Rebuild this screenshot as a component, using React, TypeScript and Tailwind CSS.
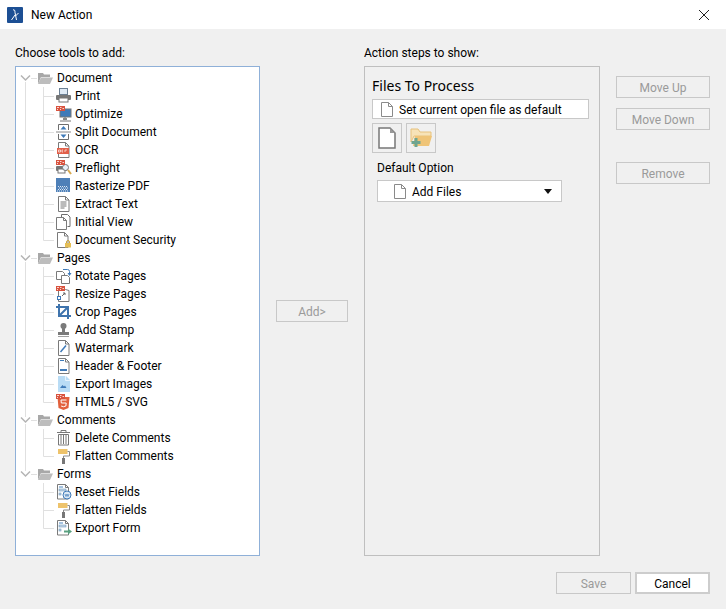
import type { ReactNode } from "react";

const FOLD = "M2.500 .500h7l3.500 3.500v11.500H2.500z M9.500 .500V4H13";

const Svg = ({ children }: { children: ReactNode }) => (
  <svg width="16" height="16" viewBox="0 0 16 16" fill="none" className="shrink-0">{children}</svg>
);

const Pro = ({ x = 0, y = 0 }: { x?: number; y?: number }) => (
  <g>
    <rect x={x} y={y} width="9" height="5" fill="#d9533f" />
    <path d={`M${x + 1} ${y + 1.5}h2 M${x + 4} ${y + 1.5}h1.5 M${x + 1} ${y + 3.5}h1 M${x + 4} ${y + 3.5}h1 M${x + 6.5} ${y + 2.5}h1.5`} stroke="#f8d8d0" />
  </g>
);

const Page = ({ d = FOLD, c = "#7a7a7a" }: { d?: string; c?: string }) => <path d={d} stroke={c} fill="#fff" />;

const Roller = () => (
  <Svg>
    <rect x="2" y="1" width="9.500" height="5" fill="#eec36b" />
    <path d="M11.500 3.500h2v4.500H7.500v2" stroke="#8a8a8a" />
    <rect x="6" y="10" width="3" height="6" fill="#777" />
  </Svg>
);

const FormPage = ({ children }: { children: ReactNode }) => (
  <Svg>
    <Page d="M1.500 .500h8l3 3v11.500h-11z M9.500 .500v3h3" />
    <path d="M3 3h4" stroke="#4a86c0" />
    <rect x="3" y="5" width="7" height="2" fill="#c8d8e8" stroke="#5a8ab5" strokeWidth=".5" />
    <rect x="3" y="9" width="2" height="2" fill="#c8d8e8" stroke="#5a8ab5" strokeWidth=".5" />
    {children}
  </Svg>
);

const ICONS: Record<string, ReactNode> = {
  print: (
    <Svg>
      <rect x="3.500" y=".500" width="8" height="6" fill="#dfeaf5" stroke="#6b7f93" />
      <rect x="0" y="7" width="15" height="5" rx="1" fill="#777" />
      <rect x="3" y="10" width="9" height="4" fill="#fff" stroke="#777" />
    </Svg>
  ),
  optimize: (
    <Svg>
      <rect x="4" y="3" width="11" height="8" fill="#3f7ab8" stroke="#777" />
      <path d="M9 11v3M4 15h11" stroke="#777" />
      <rect x="7" y="12" width="4" height="2" fill="#888" />
      <Pro />
    </Svg>
  ),
  split: (
    <Svg>
      <path d="M2.500 6V.500h10V6 M2.500 10v5.500h10V10" stroke="#6e6e6e" />
      <path d="M0 8h15" stroke="#8a8a8a" />
      <path d="M7.500 2l3 3.500h-6z M7.500 14l-3-3.500h6z" fill="#3f7ab8" />
    </Svg>
  ),
  ocr: (
    <Svg>
      <Page />
      <rect x="1" y="6" width="12" height="6" fill="#e2604a" />
      <path d="M2.500 8h2v2h-2z M7 8H6v2h1 M9 10V8h2" stroke="#fbe3dd" strokeWidth=".8" />
    </Svg>
  ),
  preflight: (
    <Svg>
      <rect x="0" y="6" width="11" height="5" rx="1" fill="#777" />
      <rect x="2" y="9" width="7" height="4" fill="#fff" stroke="#777" />
      <circle cx="9.500" cy="7.500" r="3" fill="#e8f0f8" stroke="#777" />
      <path d="M12 10l3 4" stroke="#d8a94e" strokeWidth="2" />
      <Pro />
    </Svg>
  ),
  rasterize: (
    <Svg>
      <rect x="0" y="0" width="14" height="14" fill="#4e80b8" />
      <path d="M2 8.500h10M3 10h9M2 11.500h10M1 13h11" stroke="#dfe8f2" strokeDasharray="1 1" />
    </Svg>
  ),
  extract: (
    <Svg>
      <Page />
      <path d="M4.500 6h6M4.500 8h6M4.500 10h6M4.500 12h4" stroke="#777" />
    </Svg>
  ),
  initial: (
    <Svg>
      <path d="M5.500 3V.500h6l2.500 2.500v9.500h-2.500" stroke="#6e6e6e" />
      <Page d="M.500 3.500h7l3 3v9h-10z M7.500 3.500v3h3" />
    </Svg>
  ),
  security: (
    <Svg>
      <Page d="M1.500 .500h7l3.500 3.500v11.500H1.500z M8.500 .500V4H12" />
      <path d="M10.500 11v-1a1.500 1.500 0 0 1 3 0v1" stroke="#c9a23f" />
      <rect x="9" y="11" width="6" height="4.500" fill="#e6bf55" />
    </Svg>
  ),
  rotate: (
    <Svg>
      <Page d="M.500 3.500h6l2 2v6h-8z" />
      <Page d="M5.500 7.500h6l2 2v6h-8z" />
      <path d="M7 1.500h4.500a2 2 0 0 1 2 2V6" stroke="#3f7ab8" />
      <path d="M11.500 5h4l-2 3z" fill="#3f7ab8" />
    </Svg>
  ),
  resize: (
    <Svg>
      <Page d="M2.500 3.500h7l3.500 1v11h-10.500z" />
      <rect x="1.500" y="10.500" width="3" height="3" fill="#fff" stroke="#3f7ab8" />
      <path d="M6 10l3-3M7 7h2v2" stroke="#666" />
      <Pro />
    </Svg>
  ),
  crop: (
    <Svg>
      <path d="M3 0v12h12 M0 3h12v12 M3 12l9-9" stroke="#3f74ad" strokeWidth="2" />
    </Svg>
  ),
  stamp: (
    <Svg>
      <circle cx="7.500" cy="4" r="3" fill="#7a7a7a" />
      <rect x="6" y="5" width="3" height="5" fill="#7a7a7a" />
      <rect x="2" y="10" width="11" height="3" fill="#7a7a7a" />
      <path d="M2 14.500h11" stroke="#a0a0a0" />
    </Svg>
  ),
  watermark: (
    <Svg>
      <Page />
      <path d="M4.500 12l5.500-6.500" stroke="#3f7ab8" strokeWidth="1.500" />
    </Svg>
  ),
  header: (
    <Svg>
      <Page />
      <rect x="4" y="2" width="4" height="1" fill="#3f7ab8" />
      <rect x="4" y="11" width="7" height="2" fill="#3f7ab8" />
    </Svg>
  ),
  images: (
    <Svg>
      <path d="M2 0h8l4 4v12H2z" fill="#b9dcf5" />
      <path d="M9.500 0v4.500H14" stroke="#e6f3fc" />
      <path d="M4 12l2.500-3 1.500 1.500 1-1 1.500 2.500z" fill="#3f7ab8" />
    </Svg>
  ),
  html5: (
    <Svg>
      <path d="M1.500 3h12l-1 11-5 2-5-2z" fill="#e2603c" />
      <path d="M10.500 6H5l.3 3h4.900l-.3 3-2.400 .7-2.400-.7" stroke="#fff" />
      <Pro />
    </Svg>
  ),
  trash: (
    <Svg>
      <path d="M1 2.500h13M5 2.500V.500h5v2" stroke="#777" />
      <path d="M2.500 4.500h10V15h-10z" stroke="#777" />
      <path d="M5 5v9M7.500 5v9M10 5v9" stroke="#777" />
    </Svg>
  ),
  roller: <Roller />,
  reset: (
    <FormPage>
      <circle cx="11" cy="11" r="4" fill="#dbe8f4" stroke="#3f7ab8" />
      <path d="M9 10l1 2.500 1-2.500 1 2.500 1-2.500" stroke="#3f7ab8" strokeWidth=".7" />
    </FormPage>
  ),
  exportForm: (
    <FormPage>
      <path d="M8 11.500h5" stroke="#5aa080" strokeWidth="2" />
      <path d="M12 8.500l4 3-4 3z" fill="#5aa080" />
    </FormPage>
  ),
};

const GROUPS: { name: string; items: [string, string][] }[] = [
  {
    name: "Document",
    items: [
      ["Print", "print"],
      ["Optimize", "optimize"],
      ["Split Document", "split"],
      ["OCR", "ocr"],
      ["Preflight", "preflight"],
      ["Rasterize PDF", "rasterize"],
      ["Extract Text", "extract"],
      ["Initial View", "initial"],
      ["Document Security", "security"],
    ],
  },
  {
    name: "Pages",
    items: [
      ["Rotate Pages", "rotate"],
      ["Resize Pages", "resize"],
      ["Crop Pages", "crop"],
      ["Add Stamp", "stamp"],
      ["Watermark", "watermark"],
      ["Header & Footer", "header"],
      ["Export Images", "images"],
      ["HTML5 / SVG", "html5"],
    ],
  },
  {
    name: "Comments",
    items: [
      ["Delete Comments", "trash"],
      ["Flatten Comments", "roller"],
    ],
  },
  {
    name: "Forms",
    items: [
      ["Reset Fields", "reset"],
      ["Flatten Fields", "roller"],
      ["Export Form", "exportForm"],
    ],
  },
];

function GroupRow({ name, first, last }: { name: string; first: boolean; last: boolean }) {
  return (
    <div className="flex h-[18px] items-center">
      <svg width="18" height="18" viewBox="0 0 18 18" fill="none" className="ml-[4px] shrink-0">
        {!first && <path d="M5.500 0v6" stroke="#e0e0e0" />}
        {!last && <path d="M5.500 13v5" stroke="#e0e0e0" />}
        <path d="M1 6.500l4.500 4.500 4.500-4.500" stroke="#b4b4b4" strokeWidth="1.500" />
        <path d="M11 9.500h6" stroke="#e0e0e0" />
      </svg>
      <svg width="15" height="14" viewBox="0 0 15 14" fill="none" className="shrink-0">
        <path d="M0 2h5l1 1.500h6V6H3L0 13z" fill="#a8a8a8" />
        <path d="M3 6.500h12L12 13H0z" fill="#bdbdbd" />
      </svg>
      <span className="ml-[4px]">{name}</span>
    </div>
  );
}

function ToolRow({ label, icon, groupLast, last }: { label: string; icon: string; groupLast: boolean; last: boolean }) {
  return (
    <div className="flex h-[18px] items-center">
      <svg width="40" height="18" viewBox="0 0 40 18" fill="none" className="shrink-0">
        {!groupLast && <path d="M9.500 0v18" stroke="#e0e0e0" />}
        <path d={last ? "M27.500 0v9.500H38" : "M27.500 0v18M27.500 9.500H38"} stroke="#e0e0e0" />
      </svg>
      {ICONS[icon]}
      <span className="ml-[3px]">{label}</span>
    </div>
  );
}

function Btn({ label, w, disabled = true }: { label: string; w: string; disabled?: boolean }) {
  return (
    <div className={`flex h-[22px] items-center justify-center pt-[1px] ${w} ${disabled ? "border border-[#c8c8c8] text-[#9a9a9a]" : "border-2 border-[#cdcdcd] bg-white text-black"}`}>
      {label}
    </div>
  );
}

const SmallPage = () => (
  <svg width="12" height="15" viewBox="0 0 12 15" fill="none" className="shrink-0">
    <path d="M.500 .500h7l4 4v10H.500z M7.500 .500v4h4" stroke="#8a8a8a" fill="#fff" />
  </svg>
);

export default function App() {
  return (
    <div className="flex h-[609px] w-[726px] flex-col overflow-hidden bg-[#f0f0f0] font-['Roboto',sans-serif] text-[12px] text-black">
      <div className="flex h-[29px] items-center justify-between bg-white pl-[7px] pr-[17px]">
        <div className="flex items-center gap-[8px]">
          <svg width="16" height="16" viewBox="0 0 16 16" fill="none">
            <rect width="16" height="16" rx="1" fill="#1c4f94" />
            <path d="M6 3c1.500-.8 2 .5 2 2.500L9.500 13M8 8l-3.500 5M11.500 6L8.500 9" stroke="#fff" strokeWidth="1" />
          </svg>
          <span>New Action</span>
        </div>
        <svg width="10" height="10" viewBox="0 0 10 10" fill="none">
          <path d="M0 0l10 10M10 0L0 10" stroke="#222" />
        </svg>
      </div>

      <div className="flex px-[15px] pt-[16px]">
        <div className="flex w-[245px] flex-col">
          <div className="mb-[5px] h-[16px] leading-[16px]">Choose tools to add:</div>
          <div className="h-[490px] border border-[#8fb0d8] bg-white pt-[2px]">
            {GROUPS.map((g, gi) => (
              <div key={g.name}>
                <GroupRow name={g.name} first={gi === 0} last={gi === GROUPS.length - 1} />
                {g.items.map(([label, icon], i) => (
                  <ToolRow key={label} label={label} icon={icon} groupLast={gi === GROUPS.length - 1} last={i === g.items.length - 1} />
                ))}
              </div>
            ))}
          </div>
        </div>

        <div className="flex w-[104px] items-center pl-[16px] pt-[21px]">
          <Btn label="Add>" w="w-[72px]" />
        </div>

        <div className="flex w-[236px] flex-col">
          <div className="mb-[5px] h-[16px] leading-[16px]">Action steps to show:</div>
          <div className="flex h-[490px] flex-col border border-[#bfbfbf] px-[7px]">
            <div className="mt-[9px] h-[23px] font-['Noto_Sans',sans-serif] text-[14px] leading-[20px]">Files To Process</div>
            <div className="flex h-[20px] w-[217px] items-center gap-[6px] border border-[#c8c8c8] bg-white pl-[8px]">
              <SmallPage />
              <span className="pt-[1px]">Set current open file as default</span>
            </div>
            <div className="mt-[4px] flex gap-[4px]">
              <div className="flex h-[30px] w-[30px] items-center justify-center border border-[#c8c8c8]">
                <svg width="18" height="22" viewBox="0 0 18 22" fill="none">
                  <path d="M1 1h11l5 5v15H1z" stroke="#777" strokeWidth="1.500" fill="#fff" />
                  <path d="M12 1l5 5h-5z" fill="#999" />
                </svg>
              </div>
              <div className="flex h-[30px] w-[30px] items-center justify-center border border-[#c8c8c8]">
                <svg width="24" height="20" viewBox="0 0 24 20" fill="none">
                  <path d="M2 1h7l2 3h11v4H5L2 14z" fill="#f7e3b8" stroke="#e8c27c" />
                  <path d="M6 8h17l-3 10H4z" fill="#efc477" />
                  <path d="M7 10v9M2.500 14.500h9" stroke="#6fa58f" strokeWidth="3" />
                </svg>
              </div>
            </div>
            <div className="ml-[5px] mt-[7px] h-[20px] leading-[17px]">Default Option</div>
            <div className="ml-[5px] flex h-[22px] w-[185px] items-center border border-[#c8c8c8] bg-white pl-[16px] pr-[9px]">
              <SmallPage />
              <span className="ml-[6px] flex-1 pt-[1px]">Add Files</span>
              <svg width="8" height="5" viewBox="0 0 8 5" className="shrink-0">
                <path d="M0 0h8L4 5z" fill="#111" />
              </svg>
            </div>
          </div>
        </div>

        <div className="ml-[16px] flex w-[94px] flex-col pt-[31px]">
          <Btn label="Move Up" w="w-[94px]" />
          <div className="mt-[10px]"><Btn label="Move Down" w="w-[94px]" /></div>
          <div className="mt-[32px]"><Btn label="Remove" w="w-[94px]" /></div>
        </div>
      </div>

      <div className="mt-[16px] flex justify-end gap-[4px] pr-[16px]">
        <Btn label="Save" w="w-[75px]" />
        <Btn label="Cancel" w="w-[75px]" disabled={false} />
      </div>
    </div>
  );
}
